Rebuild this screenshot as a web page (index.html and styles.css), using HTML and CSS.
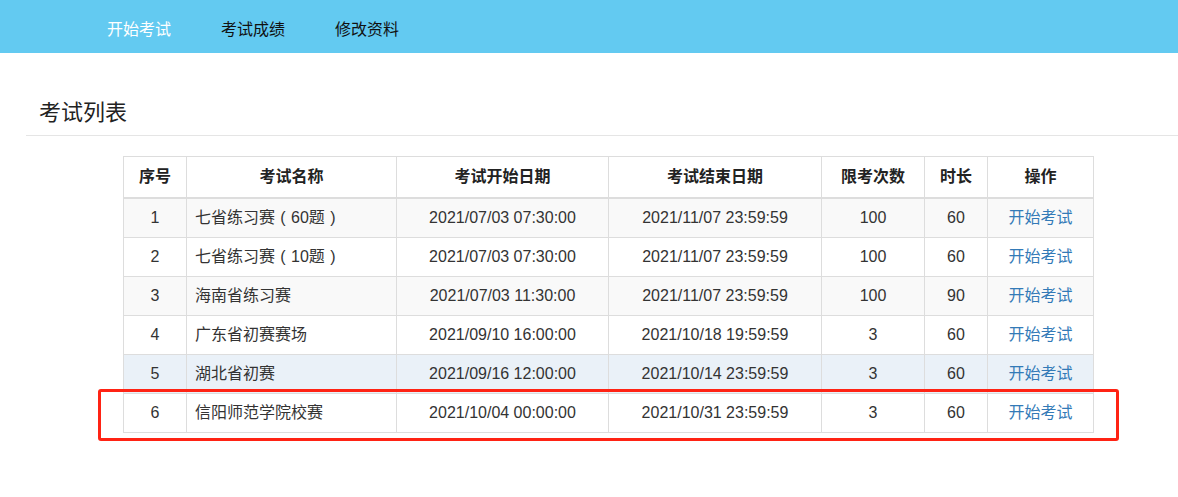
FILE: index.html
```html
<!DOCTYPE html>
<html lang="zh-CN">
<head>
  <meta charset="UTF-8">
  <meta name="viewport" content="width=device-width, initial-scale=1.0">
  <title>考试列表</title>
  <link rel="stylesheet" href="styles.css">
</head>
<body>
<div class="navbar">
  <ul class="nav">
    <li class="active"><a href="#">开始考试</a></li>
    <li><a href="#">考试成绩</a></li>
    <li><a href="#">修改资料</a></li>
  </ul>
</div>

<div class="page-header">
  <h3>考试列表</h3>
</div>

<div class="table-wrap">
  <table class="exam-table">
    <colgroup>
      <col class="c-no">
      <col class="c-name">
      <col class="c-date">
      <col class="c-date2">
      <col class="c-times">
      <col class="c-len">
      <col class="c-op">
    </colgroup>
    <thead>
      <tr>
        <th>序号</th>
        <th>考试名称</th>
        <th>考试开始日期</th>
        <th>考试结束日期</th>
        <th>限考次数</th>
        <th>时长</th>
        <th>操作</th>
      </tr>
    </thead>
    <tbody>
      <tr>
        <td>1</td>
        <td class="name">七省练习赛<span class="paren">(</span>60题<span class="paren">)</span></td>
        <td>2021/07/03 07:30:00</td>
        <td>2021/11/07 23:59:59</td>
        <td>100</td>
        <td>60</td>
        <td><a href="#">开始考试</a></td>
      </tr>
      <tr>
        <td>2</td>
        <td class="name">七省练习赛<span class="paren">(</span>10题<span class="paren">)</span></td>
        <td>2021/07/03 07:30:00</td>
        <td>2021/11/07 23:59:59</td>
        <td>100</td>
        <td>60</td>
        <td><a href="#">开始考试</a></td>
      </tr>
      <tr>
        <td>3</td>
        <td class="name">海南省练习赛</td>
        <td>2021/07/03 11:30:00</td>
        <td>2021/11/07 23:59:59</td>
        <td>100</td>
        <td>90</td>
        <td><a href="#">开始考试</a></td>
      </tr>
      <tr>
        <td>4</td>
        <td class="name">广东省初赛赛场</td>
        <td>2021/09/10 16:00:00</td>
        <td>2021/10/18 19:59:59</td>
        <td>3</td>
        <td>60</td>
        <td><a href="#">开始考试</a></td>
      </tr>
      <tr class="hover">
        <td>5</td>
        <td class="name">湖北省初赛</td>
        <td>2021/09/16 12:00:00</td>
        <td>2021/10/14 23:59:59</td>
        <td>3</td>
        <td>60</td>
        <td><a href="#">开始考试</a></td>
      </tr>
      <tr>
        <td>6</td>
        <td class="name">信阳师范学院校赛</td>
        <td>2021/10/04 00:00:00</td>
        <td>2021/10/31 23:59:59</td>
        <td>3</td>
        <td>60</td>
        <td><a href="#">开始考试</a></td>
      </tr>
    </tbody>
  </table>
  <div class="mark"></div>
</div>
</body>
</html>
```

FILE: styles.css
```css
body {
  margin: 0;
  font-family: "Liberation Sans", "Noto Sans CJK SC", sans-serif;
  font-size: 16px;
  color: #333;
  background: #fff;
}

.navbar {
  height: 53px;
  background-color: #63caf1;
}

.nav {
  list-style: none;
  margin: 0;
  padding: 0 0 0 82px;
  display: flex;
}

.nav li a {
  display: block;
  padding: 19px 25px 12px;
  line-height: 22px;
  color: #111;
  text-decoration: none;
}

.nav li.active a {
  color: #fff;
}

.page-header {
  margin: 47px 0 0 26px;
  padding: 0 0 10px 13px;
  border-bottom: 1px solid #e5e5e5;
}

.page-header h3 {
  margin: 0;
  font-size: 22px;
  font-weight: normal;
  line-height: 25px;
  color: #222;
}

.table-wrap {
  position: relative;
  width: 970px;
  margin: 20px 0 60px 123px;
}

.exam-table {
  width: 970px;
  table-layout: fixed;
  border-collapse: collapse;
}

.c-no { width: 63px; }
.c-name { width: 210px; }
.c-date { width: 212px; }
.c-date2 { width: 213px; }
.c-times { width: 103px; }
.c-len { width: 63px; }
.c-op { width: 106px; }

.exam-table th,
.exam-table td {
  border: 1px solid #ddd;
  padding: 8px;
  line-height: 22px;
  text-align: center;
  white-space: nowrap;
}

.exam-table th {
  padding: 9px 8px;
  font-weight: bold;
  color: #222;
  border-bottom-width: 2px;
}

.exam-table td.name {
  text-align: left;
}

.paren {
  display: inline-block;
  width: 16px;
  text-align: center;
}

.exam-table tbody tr:nth-child(odd) {
  background-color: #f9f9f9;
}

.exam-table tbody tr.hover {
  background-color: #eaf1f8;
}

.exam-table a {
  color: #337ab7;
  text-decoration: none;
}

.mark {
  position: absolute;
  left: -25px;
  top: 233px;
  width: 1015px;
  height: 46px;
  border: 3px solid #ff2314;
  border-radius: 3px;
}
```
